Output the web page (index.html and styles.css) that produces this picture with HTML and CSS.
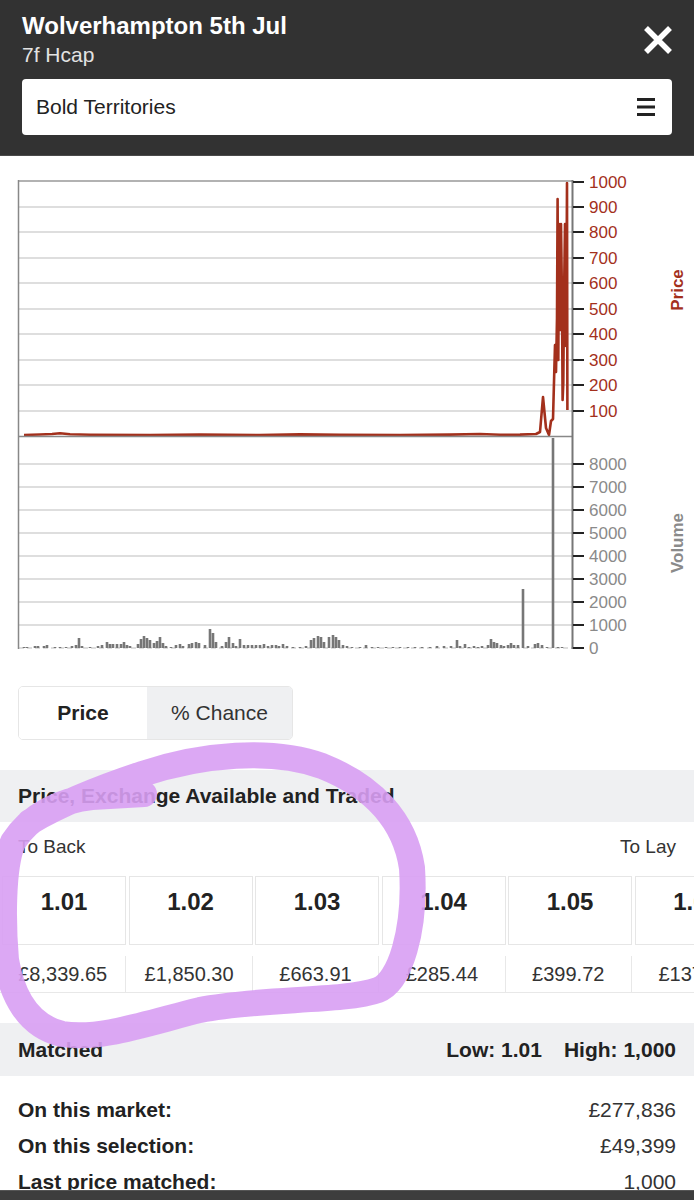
FILE: index.html
```html
<!DOCTYPE html>
<html lang="en">
<head>
    <meta charset="UTF-8">
    <meta name="viewport" content="width=device-width, initial-scale=1.0">
    <title>Wolverhampton 5th Jul - Bold Territories</title>
    <link rel="stylesheet" href="styles.css">
</head>
<body>

    <div class="header">
        <div class="head-top">
            <div class="titles">
                <h1 class="title">Wolverhampton 5th Jul</h1>
                <div class="subtitle">7f Hcap</div>
            </div>
            <svg class="close" width="28" height="28" viewBox="0 0 28 28">
                <path d="M2 2 L26 26 M26 2 L2 26" stroke="#fff" stroke-width="5.5" fill="none"/>
            </svg>
        </div>
        <div class="runner-select">
            <span>Bold Territories</span>
            <svg width="18" height="18" viewBox="0 0 18 18">
                <rect x="0" y="0" width="18" height="3" fill="#222"/>
                <rect x="0" y="7.5" width="18" height="3" fill="#222"/>
                <rect x="0" y="15" width="18" height="3" fill="#222"/>
            </svg>
        </div>
    </div>

    <!-- chart uses page coordinates: viewBox starts at y=156 -->
    <svg class="chart" width="694" height="504" viewBox="0 156 694 504">
        <g stroke="#dedede" stroke-width="2">
            <line x1="19" y1="207" x2="572" y2="207"/>
            <line x1="19" y1="232" x2="572" y2="232"/>
            <line x1="19" y1="258" x2="572" y2="258"/>
            <line x1="19" y1="283" x2="572" y2="283"/>
            <line x1="19" y1="309" x2="572" y2="309"/>
            <line x1="19" y1="334" x2="572" y2="334"/>
            <line x1="19" y1="360" x2="572" y2="360"/>
            <line x1="19" y1="385" x2="572" y2="385"/>
            <line x1="19" y1="411" x2="572" y2="411"/>

            <line x1="19" y1="464" x2="572" y2="464"/>
            <line x1="19" y1="487" x2="572" y2="487"/>
            <line x1="19" y1="510" x2="572" y2="510"/>
            <line x1="19" y1="533" x2="572" y2="533"/>
            <line x1="19" y1="556" x2="572" y2="556"/>
            <line x1="19" y1="579" x2="572" y2="579"/>
            <line x1="19" y1="602" x2="572" y2="602"/>
            <line x1="19" y1="625" x2="572" y2="625"/>
        </g>
        <line x1="19" y1="648" x2="572" y2="648" stroke="#d4d4d4" stroke-width="1.5" stroke-dasharray="5 3"/>

        <!-- volume bars -->
        <path stroke="#777" stroke-width="2.6" fill="none" d="
            M24 648v-1M27 648v-1M35 648v-2M38 648v-2M44 648v-2M47 648v-3M55 648v-1M60 648v-1M66 648v-1M72 648v-2M76 648v-3M79 648v-10M82 648v-2
            M90 648v-1M98 648v-2M102 648v-3M107 648v-6M110 648v-4M113 648v-4M117 648v-4M121 648v-4M124 648v-6M127 648v-3M130 648v-2
            M138 648v-4M141 648v-9M144 648v-12M147 648v-10M150 648v-8M154 648v-5M157 648v-7M160 648v-11M163 648v-5M166 648v-2M171 648v-1
            M176 648v-3M180 648v-4M183 648v-2M189 648v-4M192 648v-5M196 648v-6M199 648v-5M205 648v-3M210 648v-19M213 648v-15M216 648v-6
            M222 648v-2M226 648v-6M229 648v-11M233 648v-5M236 648v-2M240 648v-9M244 648v-3M248 648v-3M252 648v-3M256 648v-3M260 648v-3
            M264 648v-4M268 648v-2M272 648v-3M276 648v-3M279 648v-2M283 648v-4M287 648v-2M293 648v-1M300 648v-1M306 648v-2
            M311 648v-8M314 648v-10M318 648v-12M321 648v-11M324 648v-6M329 648v-11M333 648v-13M336 648v-11M339 648v-8M343 648v-3M347 648v-2
            M352 648v-1M360 648v-1M366 648v-3M372 648v-1M378 648v-1M386 648v-1M393 648v-1M400 648v-1M408 648v-1M415 648v-1M422 648v-1
            M430 648v-1M437 648v-2M444 648v-2M451 648v-2M457 648v-8M460 648v-2M465 648v-4M469 648v-1M474 648v-2M478 648v-1M482 648v-2
            M488 648v-3M491 648v-9M494 648v-6M497 648v-5M501 648v-3M504 648v-2M508 648v-3M511 648v-5M514 648v-3M518 648v-3
            M523 648v-59M528 648v-2M535 648v-4M538 648v-5M542 648v-3M547 648v-1M553 648v-210M558 648v-1M562 648v-1"/>

        <!-- price line -->
        <polyline fill="none" stroke="#a3301c" stroke-width="2.6" stroke-linejoin="round" points="
            24,435 40,434.5 52,434 60,433.3 70,434.3 90,434.8 150,435 200,434.6 260,435 300,434.4 340,434.8 400,435 450,434.6
            480,434 500,434.8 520,434.6 536,434 540,432 543,397 546,428 549,435 551,421 553,419 554,382 555,345 556,372
            557,318 557.6,199 558.3,360 559,224 560.3,330 561,224 562,300 562.6,400 563.3,383 564,300 565,224 566,346 566.4,300
            567,183 567.4,410"/>

        <!-- frame -->
        <line x1="18.5" y1="181" x2="572" y2="181" stroke="#999" stroke-width="1.5"/>
        <line x1="18.5" y1="180" x2="18.5" y2="649" stroke="#888" stroke-width="1.5"/>
        <line x1="18" y1="436.5" x2="572" y2="436.5" stroke="#888" stroke-width="1.5"/>
        <line x1="572.5" y1="180" x2="572.5" y2="649" stroke="#777" stroke-width="2"/>

        <!-- ticks -->
        <path stroke="#222" stroke-width="2" d="
            M573 182h11M573 207h11M573 232h11M573 258h11M573 283h11M573 309h11M573 334h11M573 360h11M573 385h11M573 411h11
            M573 464h11M573 487h11M573 510h11M573 533h11M573 556h11M573 579h11M573 602h11M573 625h11M573 648h11"/>

        <g class="axis-price">
            <text x="589" y="188">1000</text>
            <text x="589" y="213">900</text>
            <text x="589" y="238">800</text>
            <text x="589" y="264">700</text>
            <text x="589" y="289">600</text>
            <text x="589" y="315">500</text>
            <text x="589" y="340">400</text>
            <text x="589" y="366">300</text>
            <text x="589" y="391">200</text>
            <text x="589" y="417">100</text>
        </g>
        <g class="axis-volume">
            <text x="589" y="470">8000</text>
            <text x="589" y="493">7000</text>
            <text x="589" y="516">6000</text>
            <text x="589" y="539">5000</text>
            <text x="589" y="562">4000</text>
            <text x="589" y="585">3000</text>
            <text x="589" y="608">2000</text>
            <text x="589" y="631">1000</text>
            <text x="589" y="654">0</text>
        </g>
        <text class="axis-title price-title" transform="translate(683 290) rotate(-90)">Price</text>
        <text class="axis-title volume-title" transform="translate(683 543) rotate(-90)">Volume</text>
    </svg>

    <div class="toggle-wrap">
        <div class="toggle">
            <div class="toggle-item active">Price</div>
            <div class="toggle-item chance">% Chance</div>
        </div>
    </div>

    <div class="band">
        <span>Price, Exchange Available and Traded</span>
    </div>

    <div class="sides">
        <span>To Back</span>
        <span>To Lay</span>
    </div>

    <div class="prices">
        <div class="price-cell">1.01</div>
        <div class="price-cell">1.02</div>
        <div class="price-cell">1.03</div>
        <div class="price-cell">1.04</div>
        <div class="price-cell">1.05</div>
        <div class="price-cell">1.06</div>
    </div>

    <div class="amounts">
        <div class="amount-cell">£8,339.65</div>
        <div class="amount-cell">£1,850.30</div>
        <div class="amount-cell">£663.91</div>
        <div class="amount-cell">£285.44</div>
        <div class="amount-cell">£399.72</div>
        <div class="amount-cell">£137.10</div>
    </div>

    <div class="band matched">
        <span>Matched</span>
        <span class="range"><span>Low: 1.01</span><span>High: 1,000</span></span>
    </div>

    <div class="stats">
        <div class="stat-row"><span class="stat-label">On this market:</span><span>£277,836</span></div>
        <div class="stat-row"><span class="stat-label">On this selection:</span><span>£49,399</span></div>
        <div class="stat-row"><span class="stat-label">Last price matched:</span><span>1,000</span></div>
    </div>

    <div class="toolbar"></div>

    <!-- hand-drawn highlight over the first back prices -->
    <svg class="scribble" width="694" height="1200" viewBox="0 0 694 1200">
        <path d="M144 794 L92 797
                 C62 800 30 815 13 842 C2 868 3 925 6 960
                 C12 996 28 1026 62 1034 C100 1040 144 1024 200 1010
                 C258 998 345 1002 378 990 C400 982 416 930 412 868
                 C405 820 372 786 322 766 C272 748 202 754 142 774
                 C100 788 62 803 30 822"
              fill="none" stroke="#d89ff3" stroke-opacity="0.9" stroke-width="26" stroke-linecap="round" stroke-linejoin="round"/>
    </svg>

</body>
</html>
```

FILE: styles.css
```css
body {
    margin: 0;
    font-family: 'Liberation Sans', Arial, sans-serif;
    color: #222;
    background-color: #fff;
    width: 694px;
    position: relative;
    overflow: hidden;
}

.header {
    background-color: #323232;
    padding: 12px 22px 20px 22px;
    border-bottom: 1px solid #4a4a4a;
}

.head-top {
    display: flex;
    justify-content: space-between;
    align-items: center;
}

.title {
    margin: 0;
    font-size: 24px;
    line-height: 28px;
    font-weight: bold;
    color: #fff;
}

.subtitle {
    margin-top: 3px;
    font-size: 21px;
    line-height: 24px;
    color: #e2e2e2;
}

.close {
    display: block;
}

.runner-select {
    margin-top: 12px;
    height: 56px;
    background-color: #fff;
    border-radius: 4px;
    padding: 0 17px 0 14px;
    display: flex;
    align-items: center;
    justify-content: space-between;
    font-size: 21px;
    color: #222;
}

.runner-select svg {
    display: block;
}

.chart {
    display: block;
}

.axis-price text,
.axis-volume text {
    font-family: 'Liberation Sans', Arial, sans-serif;
    font-size: 17px;
}

.axis-price text {
    fill: #a3301c;
}

.axis-volume text {
    fill: #8a8a8a;
}

.axis-title {
    font-family: 'Liberation Sans', Arial, sans-serif;
    font-size: 17px;
    font-weight: bold;
    text-anchor: middle;
}

.price-title {
    fill: #a3301c;
}

.volume-title {
    fill: #8a8a8a;
}

.toggle-wrap {
    padding: 26px 18px 30px 18px;
}

.toggle {
    display: inline-flex;
    height: 54px;
    box-sizing: border-box;
    border: 1px solid #e6e6e6;
    border-radius: 5px;
    overflow: hidden;
    font-size: 21px;
}

.toggle-item {
    display: flex;
    align-items: center;
    justify-content: center;
    color: #333;
}

.toggle-item.active {
    width: 128px;
    font-weight: bold;
    color: #222;
    background-color: #fff;
}

.toggle-item.chance {
    width: 145px;
    background-color: #eff0f2;
}

.band {
    height: 52px;
    background-color: #eff0f2;
    padding: 0 18px;
    display: flex;
    align-items: center;
    justify-content: space-between;
    font-size: 21px;
    font-weight: bold;
    color: #222;
}

.sides {
    height: 50px;
    padding: 0 18px;
    display: flex;
    align-items: center;
    justify-content: space-between;
    font-size: 19px;
    color: #333;
}

.prices {
    margin-top: 4px;
    padding-left: 2px;
    display: flex;
    gap: 2.5px;
}

.price-cell {
    flex: 0 0 124px;
    height: 69px;
    box-sizing: border-box;
    border: 1px solid #e6e6e6;
    padding-top: 11px;
    text-align: center;
    font-size: 24px;
    line-height: 28px;
    font-weight: bold;
    color: #222;
}

.amounts {
    margin-top: 11px;
    display: flex;
}

.amount-cell {
    flex: 0 0 126.4px;
    height: 37px;
    box-sizing: border-box;
    border-right: 1px solid #e8e8e8;
    border-bottom: 1px solid #e8e8e8;
    display: flex;
    align-items: center;
    justify-content: center;
    font-size: 20px;
    color: #333;
}

.matched {
    margin-top: 30px;
    height: 53px;
}

.range {
    display: flex;
    gap: 22px;
}

.stats {
    padding: 16px 18px 0 18px;
}

.stat-row {
    display: flex;
    justify-content: space-between;
    font-size: 21px;
    line-height: 36px;
    color: #333;
}

.stat-label {
    font-weight: bold;
    color: #222;
}

.toolbar {
    position: fixed;
    left: 0;
    right: 0;
    bottom: 0;
    height: 9px;
    background-color: #3d3d3d;
    border-top: 1px solid #555;
}

.scribble {
    position: absolute;
    top: 0;
    left: 0;
    pointer-events: none;
}
```
